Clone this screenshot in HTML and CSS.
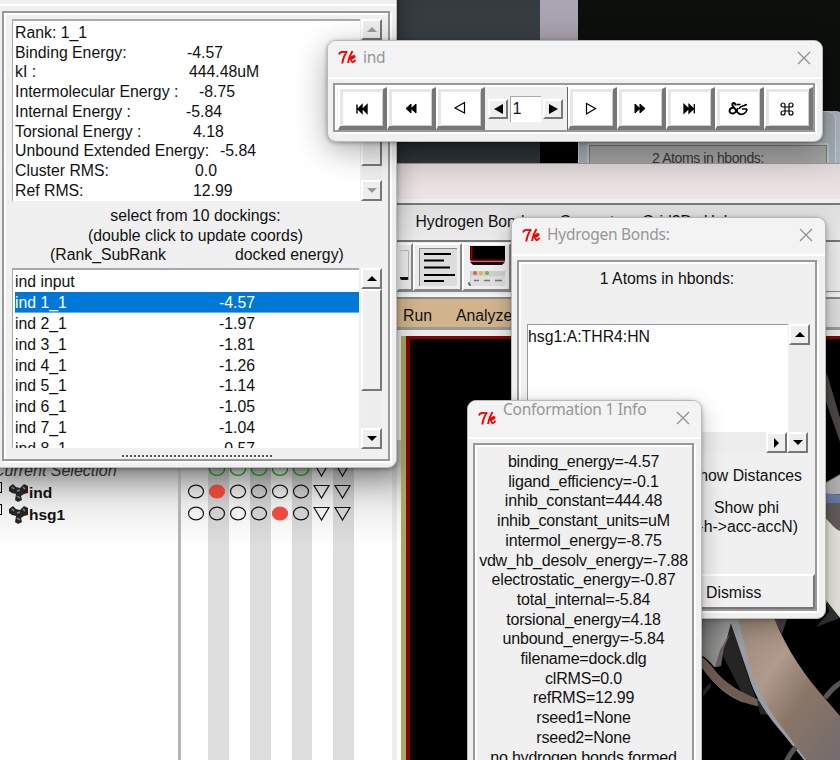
FILE: index.html
```html
<!DOCTYPE html>
<html lang="en">
<head>
<meta charset="utf-8">
<title>Docking conformations</title>
<link rel="stylesheet" href="styles.css">
</head>
<body>
<svg class="defs" width="0" height="0">
  <symbol id="tk" viewBox="0 0 19 15"><path d="M1 4.5C2 1.500 4 1.500 9 2.300M9.200 1.300C6.500 4.500 5 8 4.300 13.500M14.500 1C12.500 4 10.500 9 10 13M11 9.200C13 7.500 15.500 5.200 16.500 6.200C17.300 7.200 14 8.600 12.200 8.700C13.500 9 13.300 12.300 14.700 12.200C15.800 12.200 16.800 10.800 17.500 9.800" fill="none" stroke="#f80000" stroke-width="1.900"/></symbol>
  <symbol id="close" viewBox="0 0 14 14"><path d="M1 1L13 13M13 1L1 13" stroke="#8f8f8f" stroke-width="1.200" fill="none"/></symbol>
  <symbol id="mol" viewBox="0 0 21 19"><path d="M1 4L5 1L8 4L12 5L16 1L20 3V10L16 11L13 13L14 17L10 19L7 17L8 11L4 10L1 8Z" fill="#252525"/><path d="M4 4L6 6M9 8L12 7M15 4L17 6M9 13L12 15" stroke="#888" stroke-width="1.500"/></symbol>
</svg>
<div class="desktop">
  <div class="wall"><i class="slate"></i><i class="lilac"></i><i class="night"></i></div>
  <section class="old"><div class="old-in">2 Atoms in hbonds:</div></section>

  <section class="main">
    <div class="main-title"></div>
    <nav class="menu"><span>Hydrogen Bonds</span><span>Compute</span><span>Grid3D</span><span>Help</span></nav>
    <div class="tools">
      <div class="tool cut"><i></i></div>
      <div class="tool"><svg width="40" height="40" viewBox="0 0 40 40"><path d="M1 1H39V39H1Z" fill="#dcdcdc"/><path d="M1.500 39V1.500H39" stroke="#888" fill="none"/><path d="M6 7H33M6 13.500H26M6 20.500H32M6 28H37M6 34H26" stroke="#000" stroke-width="2.200"/></svg></div>
      <div class="tool"><svg width="38" height="42" viewBox="0 0 38 42"><path d="M2 0H37V14H2Z" fill="#000"/><path d="M3.500 0V14.500H37" stroke="#9a0008" stroke-width="2" fill="none"/><path d="M2 16H37L34 19H5Z" fill="#111"/><path d="M2 25H37V40H2Z" fill="#ccd0d2"/><path d="M3 30H37V40H3Z" fill="#dedede"/><circle cx="7" cy="27" r="2" fill="#df5a55"/><circle cx="13" cy="27" r="2" fill="#e8ae42"/><circle cx="19" cy="27" r="2" fill="#72ae47"/><path d="M6 34.500H11M16 34.500H22M27 34.500H34" stroke="#777" stroke-width="1.500"/><path d="M1 36V39H3" stroke="#124" fill="none"/></svg></div>
    </div>
    <nav class="tan"><span>Run</span><span>Analyze</span></nav>
    <div class="viewer">
      <svg class="ribbons" width="140" height="421" viewBox="700 339 140 421">
        <defs>
          <linearGradient id="skin" x1="0" y1="0" x2="1" y2="1"><stop offset="0" stop-color="#9d8779"/><stop offset=".35" stop-color="#af9a8b"/><stop offset=".6" stop-color="#897666"/><stop offset="1" stop-color="#746b6e"/></linearGradient>
          <linearGradient id="steel"><stop offset="0" stop-color="#777876"/><stop offset="1" stop-color="#a3a3a3"/></linearGradient>
        </defs>
        <path d="M824 370L828 377L840 418V442L824 396Z" fill="#4c4745"/>
        <path d="M824 483L840 474V532L824 518Z" fill="#625c5a"/>
        <path d="M824 484L840 475V494H824Z" fill="#b4b2b0"/>
        <path d="M824 493L840 495V503H824Z" fill="#667ba9"/>
        <path d="M824 517C830 522 835 529 840 531V618L824 600Z" fill="#e4e4dd"/>
        <path d="M826 600L840 618L816 627L829 612Z" fill="#303232"/>
        <path d="M729 618L720 650L744 697L756 700Z" fill="#242524"/>
        <path d="M700 615H733L727 638C722 649 720 655 720 666L714 667C709 660 705 657 700 655Z" fill="url(#steel)"/>
        <path d="M731 632L724 648L721 666L715 667L720 650Z" fill="#675c5c"/>
        <path d="M772 616H788L782 634Z" fill="#4a4242"/>
        <path d="M700 656C707 660 709 663 718 674C731 688 748 695 764 702L763 707C742 704 725 696 713 681C707 674 703 669 700 664Z" fill="#6f5c51"/>
        <path d="M702 667C712 682 725 694 743 702" stroke="#67728a" stroke-width="1" fill="none"/>
        <path d="M703 690L711 682V687L703 697ZM757 700L770 706L780 717L760 714Z" fill="#242729"/>
        <path d="M729 618H739L749 652C757 678 767 700 782 719L807 760H804L784 735C765 713 755 697 748 674Z" fill="#9a9da3"/>
        <path d="M738 618H774C788 652 805 676 828 702L840 716V760H806L784 730C756 694 750 668 738 618Z" fill="url(#skin)"/>
        <path d="M825 698Q832 688 842 682M786 762Q791 752 796 747" stroke="#555453" stroke-width="5" fill="none"/>
      </svg>
    </div>
  </section>

  <section class="tree">
    <div class="names">
      <div class="name sel">Current Selection</div>
      <div class="name"><i class="box"></i><svg class="mol"><use href="#mol"/></svg><b>ind</b></div>
      <div class="name"><i class="box"></i><svg class="mol"><use href="#mol"/></svg><b>hsg1</b></div>
    </div>
    <div class="cols"><svg width="176" height="70" viewBox="181 460 176 70" fill="none" stroke="#151515" stroke-width="1.200">
      <g stroke="#0b9a0b"><ellipse cx="217" cy="469" rx="7.500" ry="6.300"/><ellipse cx="238" cy="469" rx="7.500" ry="6.300"/><ellipse cx="259" cy="469" rx="7.500" ry="6.300"/><ellipse cx="280" cy="469" rx="7.500" ry="6.300"/><ellipse cx="301" cy="469" rx="7.500" ry="6.300"/></g>
      <g><ellipse cx="196" cy="491.500" rx="7.500" ry="6.300"/><ellipse cx="217" cy="491.500" rx="7.500" ry="6.300" fill="#e8463c" stroke="#e8463c"/><ellipse cx="238" cy="491.500" rx="7.500" ry="6.300"/><ellipse cx="259" cy="491.500" rx="7.500" ry="6.300"/><ellipse cx="280" cy="491.500" rx="7.500" ry="6.300"/><ellipse cx="301" cy="491.500" rx="7.500" ry="6.300"/></g>
      <g><ellipse cx="196" cy="513.500" rx="7.500" ry="6.300"/><ellipse cx="217" cy="513.500" rx="7.500" ry="6.300"/><ellipse cx="238" cy="513.500" rx="7.500" ry="6.300"/><ellipse cx="259" cy="513.500" rx="7.500" ry="6.300"/><ellipse cx="280" cy="513.500" rx="7.500" ry="6.300" fill="#f04a40" stroke="#f04a40"/><ellipse cx="301" cy="513.500" rx="7.500" ry="6.300"/></g>
      <path d="M314 463H329L321.500 476ZM335 463H350L342.500 476ZM314 485.500H329L321.500 498ZM335 485.500H350L342.500 498ZM314 507.500H329L321.500 520ZM335 507.500H350L342.500 520Z"/></svg></div>
  </section>

  <section class="win dock">
    <div class="frame dock-in">
      <div class="pane rank">
        <div class="text">
          <p>Rank: 1_1</p>
          <p><span class="w172">Binding Energy:</span>-4.57</p>
          <p><span class="w174">kI :</span>444.48uM</p>
          <p><span class="w184">Intermolecular Energy :</span>-8.75</p>
          <p><span class="w171">Internal Energy :</span>-5.84</p>
          <p><span class="w178">Torsional Energy :</span>4.18</p>
          <p><span class="w205">Unbound Extended Energy:</span>-5.84</p>
          <p><span class="w180">Cluster RMS:</span>0.0</p>
          <p><span class="w178">Ref RMS:</span>12.99</p>
        </div>
        <div class="bar off"><i class="arrow up"></i><i class="thumb"></i><i class="arrow down"></i></div>
      </div>
      <div class="caption"><p>select from 10 dockings:</p><p>(double click to update coords)</p><p class="heads"><span>(Rank_SubRank</span><span>docked energy)</span></p></div>
      <div class="pane list">
        <div class="rows">
          <p>ind input</p>
          <p class="on"><span>ind 1_1</span>-4.57</p>
          <p><span>ind 2_1</span>-1.97</p>
          <p><span>ind 3_1</span>-1.81</p>
          <p><span>ind 4_1</span>-1.26</p>
          <p><span>ind 5_1</span>-1.14</p>
          <p><span>ind 6_1</span>-1.05</p>
          <p><span>ind 7_1</span>-1.04</p>
          <p><span>ind 8_1</span>-0.57</p>
        </div>
        <div class="bar"><i class="arrow up"></i><i class="thumb"></i><i class="arrow down"></i></div>
      </div>
      <i class="cutline"></i>
    </div>
  </section>

  <section class="win hb">
    <header><svg class="tk"><use href="#tk"/></svg><span>Hydrogen Bonds:</span><svg class="x"><use href="#close"/></svg></header>
    <div class="frame hb-in">
      <p class="count">1 Atoms in hbonds:</p>
      <div class="pane hb-list"><div class="text">hsg1:A:THR4:HN</div><div class="bar"><i class="arrow up"></i><i class="fill"></i></div></div>
      <div class="hbar"><i class="arrow right"></i><i class="arrow down"></i></div>
      <div class="opts"><p class="o1">Show Distances</p><p class="o2">Show phi</p><p class="o3">(d-h-&gt;acc-accN)</p></div>
      <div class="dismiss">Dismiss</div>
    </div>
  </section>

  <section class="win conf">
    <header><svg class="tk"><use href="#tk"/></svg><span>Conformation 1 Info</span><svg class="x"><use href="#close"/></svg></header>
    <div class="frame conf-in">
      <p>binding_energy=-4.57</p><p>ligand_efficiency=-0.1</p><p>inhib_constant=444.48</p><p>inhib_constant_units=uM</p><p>intermol_energy=-8.75</p><p>vdw_hb_desolv_energy=-7.88</p><p>electrostatic_energy=-0.87</p><p>total_internal=-5.84</p><p>torsional_energy=4.18</p><p>unbound_energy=-5.84</p><p>filename=dock.dlg</p><p>clRMS=0.0</p><p>refRMS=12.99</p><p>rseed1=None</p><p>rseed2=None</p><p>no hydrogen bonds formed</p>
    </div>
  </section>

  <section class="win ind">
    <header><svg class="tk"><use href="#tk"/></svg><span>ind</span><svg class="x"><use href="#close"/></svg></header>
    <div class="frame player">
      <div class="key"><svg viewBox="0 0 20 16"><path d="M5 3.500V12.500M10 4V12L6 8ZM15 4V12L11 8Z" fill="#000" stroke="#000" stroke-width="1.400"/></svg></div>
      <div class="key"><svg viewBox="0 0 20 16"><path d="M10 3V12L5 7.500ZM15 3V12L10 7.500Z" fill="#000" stroke="#000" stroke-width="1"/></svg></div>
      <div class="key"><svg viewBox="0 0 20 16"><path d="M14.500 1.500V12L5 7Z" fill="none" stroke="#000" stroke-width="1.200"/></svg></div>
      <div class="spin"><i class="arrow left"></i><b>1</b><i class="arrow right"></i></div>
      <div class="key"><svg viewBox="0 0 20 16"><path d="M5.500 2.500V13L14.500 7.500Z" fill="none" stroke="#000" stroke-width="1.200"/></svg></div>
      <div class="key"><svg viewBox="0 0 20 16"><path d="M5 3V12L10 7.500ZM10 3V12L15 7.500Z" fill="#000" stroke="#000" stroke-width="1"/></svg></div>
      <div class="key"><svg viewBox="0 0 20 16"><path d="M5 3.500V12L9.500 7.700ZM10 3.500V12L14.500 7.700ZM15.300 3V12.500" fill="#000" stroke="#000" stroke-width="1.300"/></svg></div>
      <div class="key"><svg viewBox="0 0 20 16"><path d="M7.500 4.500C7.500 1 3.500 1.500 4.500 4.500L10 12M6 6.500C0 7 .5 13 5 12.500C8 12 9 9.500 10 7" fill="none" stroke="#000" stroke-width="2"/><path d="M8.500 3.500H12.500M18.500 3C18 5.500 11.500 4 11.500 8M19 8C18.500 13 12 15 10 11.500M14 8H19" fill="none" stroke="#000" stroke-width="1.600"/></svg></div>
      <div class="key"><svg viewBox="0 0 20 16"><path d="M8 6V4A2 2 0 1 0 6 6H14A2 2 0 1 0 12 4V12A2 2 0 1 0 14 10H6A2 2 0 1 0 8 12Z" fill="none" stroke="#000" stroke-width="1.200"/></svg></div>
    </div>
  </section>
</div>
</body>
</html>
```
FILE: styles.css
```css
* { box-sizing: border-box; }
body { margin: 0; background: #fff; color: #111; font: 16px/19.7px "Liberation Sans", Arial, sans-serif; }
p { margin: 0; white-space: nowrap; }
i { display: block; font-style: normal; }
svg { flex: none; }
.defs { position: absolute; }
.desktop { position: relative; width: 840px; height: 760px; overflow: hidden; }

.wall { position: absolute; left: 397px; top: 0; width: 443px; height: 163px; display: flex; background: #000; }
.slate { width: 143px; background: linear-gradient(#353a3e, #3b4146 30%, #262c30 88%, #30363a); }
.lilac { width: 38px; background: linear-gradient(#aba5b3 0, #a49faa 80px, #130f11 81px, #000); }
.night { flex: 1; background: #0c0f0b; }
.old { position: absolute; left: 578px; top: 111px; width: 258px; height: 60px; padding: 33px 8px 0 10px; background: #a1abb3; border: 1px solid #c0c8ce; border-radius: 8px; box-shadow: 8px 0 #a9b3bd; }
.old-in { height: 40px; border: 1px solid #777; outline: 2px solid #bbb; background: #a2a2a2; color: #363636; text-align: center; line-height: 24px; font-size: 14px; letter-spacing: -.4px; }

.main { position: absolute; left: 397px; top: 163px; width: 443px; height: 597px; background: #ebebeb; display: flex; flex-direction: column; }
.main-title { flex: none; height: 42px; background: linear-gradient(#dfd5d7, #efe7e8); border-top: 1px solid #999; border-bottom: 2px solid #777; box-shadow: inset 0 -4px #edf1f1; }
.menu { flex: none; height: 37px; padding: 7px 0 0 18.500px; display: flex; gap: 19px; border-bottom: 2px solid #777; background: linear-gradient(#dedede, #ececec); font-size: 15.700px; }
.menu span:first-child { margin-right: 8px; }
.menu span:last-child { margin-left: -7px; }
.tools { flex: none; display: flex; height: 50px; padding-top: 1px; background: #ededed; border-bottom: 1px solid #888; }
.tool { width: 49px; height: 48px; border: 2px solid; border-color: #fff #888 #888 #fff; background: #eee; display: grid; place-items: center; }
.tool.cut { width: 16px; padding: 0 2px 4px 0; }
.cut i { width: 9px; height: 30px; border: 1px solid #bbb; border-bottom: 3px solid #111; border-left: 0; border-radius: 2px; }
.tan { flex: none; height: 33px; margin-top: 5px; padding-top: 8px; padding-left: 6px; display: flex; gap: 24px; background: linear-gradient(90deg, #d2b48c 424px, #ddd 425px); border-top: 2px solid #888; border-bottom: 3px solid #999; box-shadow: 0 -3px #f5f5f5; line-height: 18px; font-size: 15.800px; }
.viewer { flex: 1; margin: 6px 0 0 4px; border-left: 5px solid #a9aa5b; background: #000; box-shadow: inset 4px 3px #8b0000; position: relative; }
.ribbons { position: absolute; right: 0; bottom: 0; }

.tree { position: absolute; left: 0; top: 440px; width: 401px; height: 320px; display: flex; background: linear-gradient(#bbb 25px, #eee 70px, #fff 105px); }
.names { width: 181px; border-right: 3px solid #b3b3b3; padding-top: 19.500px; }
.name { display: flex; height: 22px; line-height: 22px; align-items: center; position: relative; }
.name.sel { font-style: italic; margin-left: -7px; white-space: nowrap; color: #333; }
.box { width: 2px; height: 11px; border: 1px solid #000; border-left: 0; align-self: flex-start; }
.mol { width: 21px; height: 19px; margin-left: 6px; }
.name b { font-size: 15.500px; }
.cols { flex: 1; padding-top: 20px; background: linear-gradient(90deg, transparent 27px, #0002 27px 48px, transparent 48px 69px, #0002 69px 90px, transparent 90px 111px, #0002 111px 131px, transparent 131px 152px, #0002 152px 173px, transparent 173px 211px, #0001 211px 216px, transparent 216px); }

.win { position: absolute; background: #f0f0f0; border: 1px solid #bababa; border-radius: 9px; box-shadow: 0 8px 22px #0004, 0 1px 4px #0004; overflow: hidden; }
.win header { display: flex; align-items: center; background: #f3f3f3; border-bottom: 2px solid #fff; color: #969696; font-family: "Noto Sans", sans-serif; font-size: 15.500px; letter-spacing: -.25px; }
.tk { width: 19px; height: 15px; margin-right: 6px; }
.x { width: 14px; height: 14px; margin-left: auto; }
.frame { border: 2px solid #999; box-shadow: inset 2px 2px #fff, 2px 2px #fff; background: #f0f0f0; }
.pane { display: flex; }
.bar { width: 21px; display: flex; flex-direction: column; background: #ededed; }
.arrow { width: 21px; height: 21px; flex: none; border: 2px solid; border-color: #fff #777 #777 #fff; background: #eee; display: grid; place-items: center; }
.arrow::before { content: ""; border: 5px solid transparent; }
.up::before { border-bottom-color: #000; border-top: 0; }
.down::before { border-top-color: #000; border-bottom: 0; }
.left::before { border-right-color: #000; border-left: 0; border-right-width: 9px; }
.right::before { border-left-color: #000; border-right: 0; }
.spin .right::before { border-left-width: 9px; }
.thumb { border: 2px solid; border-color: #fff #777 #777 #fff; background: #efefef; }

.dock { left: -8px; top: -20px; width: 405px; height: 488px; padding: 23px 5px 5px 9px; box-shadow: 0 8px 24px #0005, 0 1px 4px #0005; }
.dock::before { content: ""; display: block; height: 2px; background: #fff; margin: 0 -9px 5px; }
.dock-in { height: 450px; margin-right: 1px; padding: 6px 5px 0 8px; font-size: 15.800px; }
.rank { height: 182px; }
.rank .text { width: 348px; margin-right: 1px; padding: 2px 0 0 2px; background: #fff; border: 1px solid #aaa; border-width: 2px 0 0 1px; }
.text p span, .rows span { display: inline-block; }
.w172 { width: 172px; } .w174 { width: 174px; } .w184 { width: 184px; } .w171 { width: 171px; } .w178 { width: 178px; } .w205 { width: 205px; } .w180 { width: 180px; }
.rank .thumb { height: 126px; }
.rank .down { margin-top: 14px; }
.off .up::before { border-bottom-color: #999; } .off .down::before { border-top-color: #999; }
.caption { height: 67px; padding-top: 5px; text-align: center; padding-right: 4px; }
.heads { display: flex; gap: 69px; padding-left: 38px; }
.list { height: 181px; }
.list .rows { width: 347px; height: 180px; margin-right: 2px; padding: 1px 0 0 2px; background: #fff; border-top: 2px solid #aaa; border-left: 1px solid #aaa; overflow: hidden; }
.rows p { height: 20.900px; line-height: 21px; }
.rows p.on { background: #0078d7; color: #fff; border-bottom: 1px solid #67aeea; }
.rows span { width: 204px; }
.list .thumb { height: 102px; }
.list .down { margin-top: auto; }
.cutline { width: 150px; height: 2px; margin: 6px 0 0 110px; background: repeating-linear-gradient(90deg, #555 0 2px, transparent 2px 4px); }

.ind { left: 327px; top: 40px; width: 496px; height: 102px; box-shadow: 0 8px 32px #0005, 0 1px 4px #0005; }
.ind header { height: 38px; padding: 0 11px 3px 10px; }
.player { margin: 4px 7px 0 5px; height: 49px; display: flex; padding: 2px 0 0 3px; }
.key { width: 49.100px; height: 43px; border: 4px solid; border-color: #fff #777 #777 #fff; border-width: 2px 4px 4px 2px; box-shadow: inset 3px 3px #e6e6e6, inset -1px -1px #ccc; background: #fff; display: grid; place-items: center; }
.key svg { width: 20px; height: 16px; margin-top: 2px; }
.spin { flex: 1; display: flex; align-items: center; justify-content: center; gap: 2px; border-right: 1px solid #666; background: #f0f0f0; }
.spin b { width: 31px; height: 26px; padding: 2px 0 0 1px; font-weight: 400; background: #fff; border: 1px solid #aaa; border-width: 1px 0 0 1px; }
.spin .arrow { width: 20px; height: 20px; }

.hb { left: 511px; top: 217px; width: 315px; height: 402px; font-size: 15.800px; }
.hb header { height: 38px; padding: 0 12px 2px 10px; }
.hb-in { margin: 4px 8px 0 5px; height: 351px; display: flex; flex-direction: column; }
.count { height: 62px; padding-top: 7px; text-align: center; }
.hb-list { height: 108px; padding-left: 8px; }
.hb-list .text { width: 261px; margin-right: 1px; padding: 2px 0 0 0; background: #fff; border: 1px solid #999; border-width: 1px 0 0 1px; }
.hbar { height: 21px; margin: 0 7px 0 8px; display: flex; justify-content: flex-end; background: #ededed; }
.opts { height: 121px; padding: 13px 13px 0 0; text-align: right; }
.o2 { margin: 12px 23px 0 0; }
.o3 { padding-right: 4px; }
.dismiss { flex: 1; border: 2px solid; border-color: #fff #777 #777 #fff; padding: 7px 0 0 185px; }

.conf { left: 467px; top: 400px; width: 235px; height: 380px; }
.conf header { height: 38px; padding: 0 11px 2px 10px; }
.conf header span { align-self: flex-start; margin-top: -1px; }
.conf-in { margin: 4px 7px 0 5px; height: 340px; padding-top: 7px; text-align: center; letter-spacing: -.2px; }
```
